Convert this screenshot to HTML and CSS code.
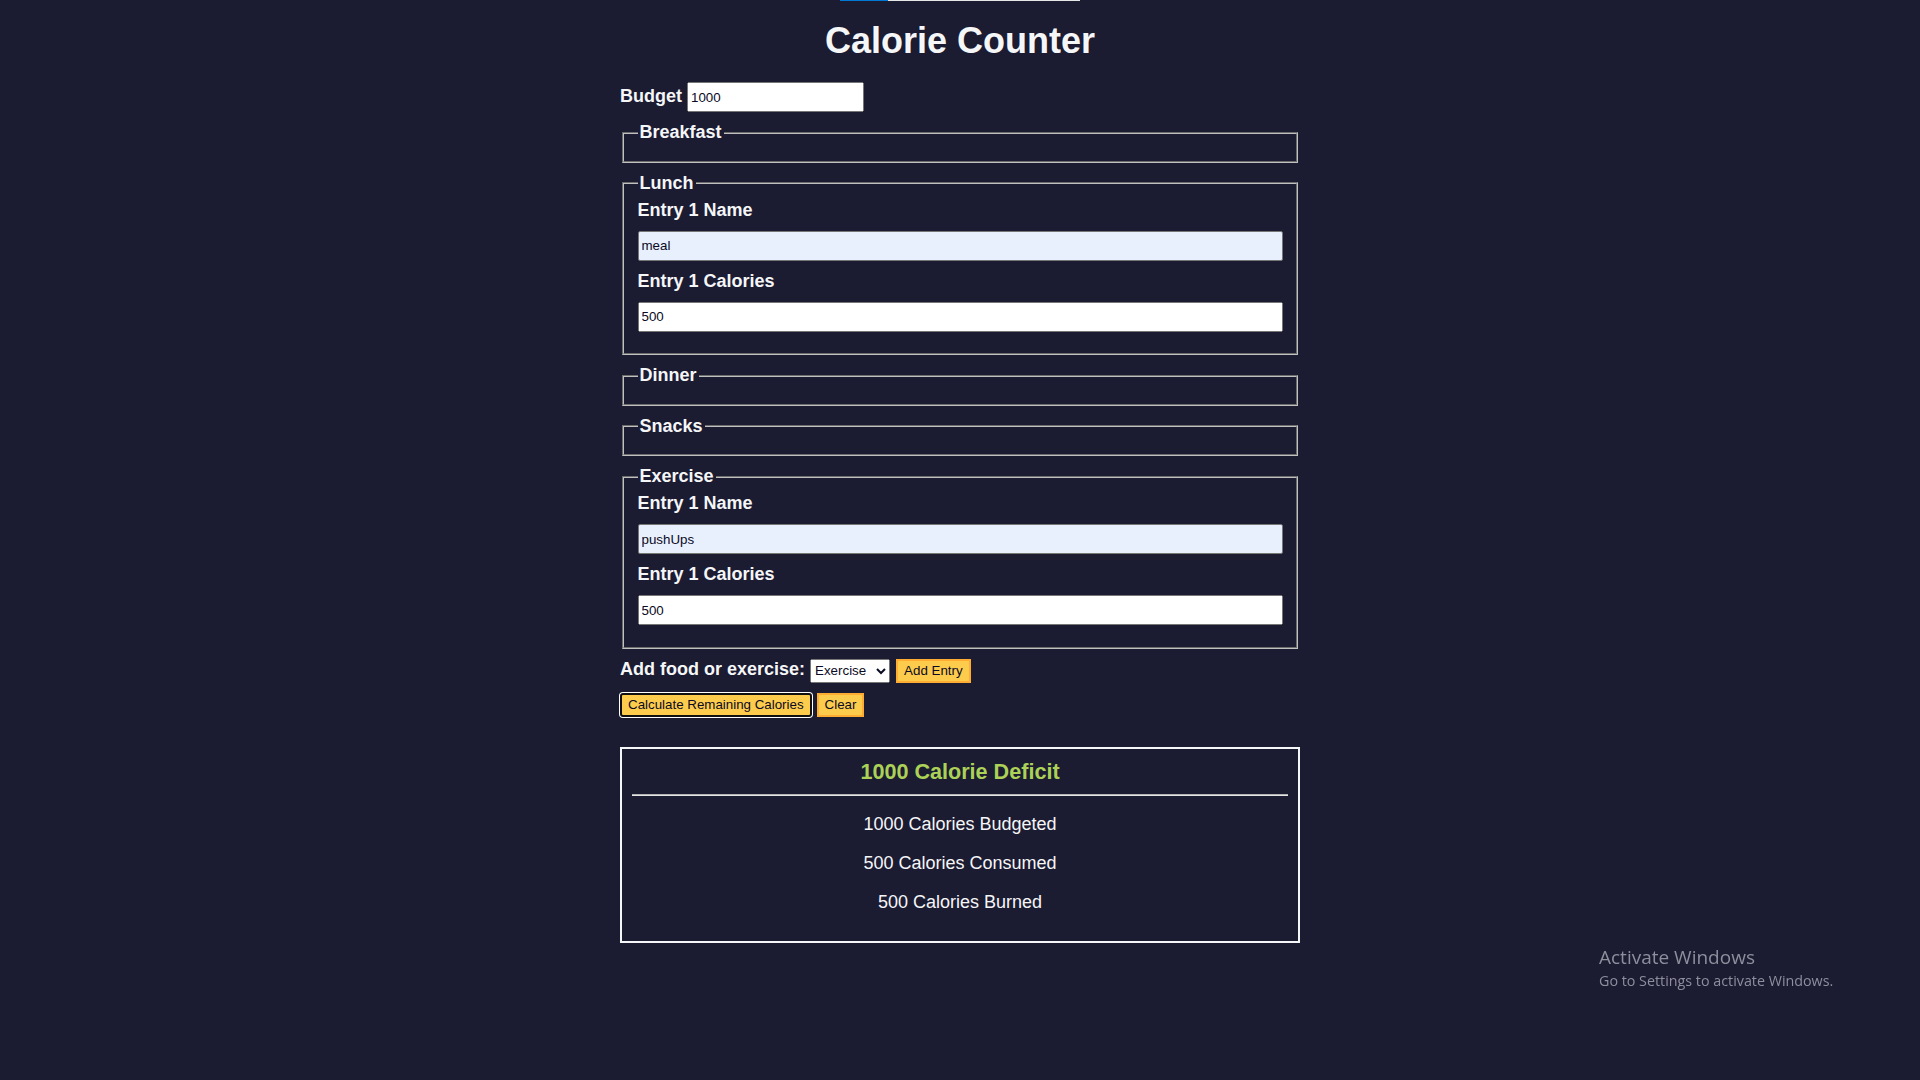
FILE: index.html
```html
<!DOCTYPE html>
<html lang="en">
<head>
<meta charset="UTF-8">
<title>Calorie Counter</title>
<link rel="stylesheet" href="styles.css">
</head>
<body>
<div class="top-indicator"><span class="seg-blue"></span><span class="seg-grey"></span></div>
<main>
  <h1>Calorie Counter</h1>
  <div class="container">
    <form id="calorie-counter" class="counter-form">
      <label for="budget">Budget</label>
      <input type="number" min="0" id="budget" class="budget-input" value="1000">
      <fieldset id="breakfast" class="meal">
        <legend>Breakfast</legend>
        <div class="input-container"></div>
      </fieldset>
      <fieldset id="lunch" class="meal">
        <legend>Lunch</legend>
        <div class="input-container">
          <label for="lunch-1-name">Entry 1 Name</label>
          <input type="text" id="lunch-1-name" class="entry-name" value="meal">
          <label for="lunch-1-calories">Entry 1 Calories</label>
          <input type="number" min="0" id="lunch-1-calories" class="entry-cal" value="500">
        </div>
      </fieldset>
      <fieldset id="dinner" class="meal">
        <legend>Dinner</legend>
        <div class="input-container"></div>
      </fieldset>
      <fieldset id="snacks" class="meal">
        <legend>Snacks</legend>
        <div class="input-container"></div>
      </fieldset>
      <fieldset id="exercise" class="meal">
        <legend>Exercise</legend>
        <div class="input-container">
          <label for="exercise-1-name">Entry 1 Name</label>
          <input type="text" id="exercise-1-name" class="entry-name" value="pushUps">
          <label for="exercise-1-calories">Entry 1 Calories</label>
          <input type="number" min="0" id="exercise-1-calories" class="entry-cal" value="500">
        </div>
      </fieldset>
      <div class="controls">
        <span>
          <label for="entry-dropdown">Add food or exercise:</label>
          <select id="entry-dropdown" name="options" class="entry-select">
            <option value="breakfast">Breakfast</option>
            <option value="lunch">Lunch</option>
            <option value="dinner">Dinner</option>
            <option value="snacks">Snacks</option>
            <option value="exercise" selected>Exercise</option>
          </select>
          <button type="button" id="add-entry" class="btn">Add Entry</button>
        </span>
      </div>
      <div class="actions">
        <button type="submit" class="btn btn-focused">Calculate Remaining Calories</button>
        <button type="button" id="clear" class="btn">Clear</button>
      </div>
    </form>
    <div id="output" class="output">
      <span class="deficit">1000 Calorie Deficit</span>
      <hr class="divider">
      <p>1000 Calories Budgeted</p>
      <p>500 Calories Consumed</p>
      <p>500 Calories Burned</p>
    </div>
  </div>
</main>
<div class="watermark">
  <div class="wm-title">Activate Windows</div>
  <div class="wm-sub">Go to Settings to activate Windows.</div>
</div>
</body>
</html>
```

FILE: styles.css
```css
:root {
  --light-grey: #f5f6f7;
  --dark-blue: #0a0a23;
  --fcc-blue: #1b1b32;
  --light-yellow: #fecc4c;
  --dark-yellow: #feac32;
  --light-green: #acd157;
}

html,
body {
  margin: 0;
  padding: 0;
}

body {
  font-family: "Liberation Sans", Arial, Helvetica, sans-serif;
  font-size: 18px;
  background-color: var(--fcc-blue);
  color: var(--light-grey);
}

main {
  padding: 2px 8px 0;
}

h1 {
  text-align: center;
  font-size: 2em;
  line-height: 41px;
  margin: 18px auto 21px;
}

.container {
  width: 90%;
  max-width: 680px;
}

.container,
.output {
  margin: 20px auto;
}

.counter-form {
  margin-bottom: 20px;
}

label,
legend {
  font-weight: bold;
}

.input-container {
  display: flex;
  flex-direction: column;
}

fieldset {
  border: 2px groove #c0c0c0;
  margin: 0 2px 10px;
  padding: 0.35em 0.75em 0.625em;
}

legend {
  padding: 0 2px;
}

button,
input,
select {
  min-height: 24px;
  color: var(--dark-blue);
  font-family: "Liberation Sans", Arial, sans-serif;
  font-size: 13.333px;
}

label,
button,
input,
select {
  margin-bottom: 10px;
}

.budget-input {
  width: 169px;
}

.entry-select {
  width: 80px;
  margin-right: 1px;
}

.entry-name {
  background-color: #e8f0fe;
  border: 1px solid #767676;
  border-radius: 2px;
  padding: 2px 3px;
}

.btn {
  cursor: pointer;
  text-decoration: none;
  background-color: var(--light-yellow);
  border: 2px solid var(--dark-yellow);
  padding: 1px 6px;
}

.btn-focused {
  border-color: #101010;
  border-radius: 3px;
  box-shadow: 0 0 0 1px #ffffff;
}

.output {
  border: 2px solid var(--light-grey);
  padding: 10px;
  text-align: center;
  box-sizing: border-box;
  width: 100%;
}

.output span {
  font-weight: bold;
  font-size: 1.2em;
}

.deficit {
  color: var(--light-green);
}

.divider {
  margin: 0.5em 0;
  border: 0;
  border-top: 1px solid #b4b4b4;
  border-bottom: 1px solid #e4e4e4;
}

.top-indicator {
  position: absolute;
  top: 0;
  left: 840px;
  display: flex;
  height: 1px;
}

.seg-blue {
  width: 48px;
  background: #0078d4;
}

.seg-grey {
  width: 192px;
  background: #e6e6e6;
}

.watermark {
  position: fixed;
  left: 1599px;
  top: 944px;
  color: #8e8e9c;
  font-family: "Open Sans", "Noto Sans", sans-serif;
}

.wm-title {
  font-size: 19px;
  line-height: 26px;
}

.wm-sub {
  font-size: 14.3px;
  line-height: 21px;
}
```
